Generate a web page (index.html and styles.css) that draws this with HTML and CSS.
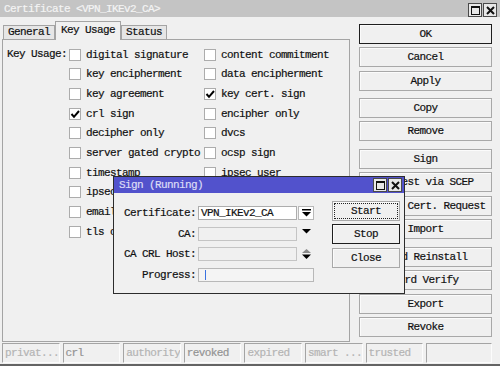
FILE: index.html
```html
<!DOCTYPE html>
<html>
<head>
<meta charset="utf-8">
<title>Certificate</title>
<link rel="stylesheet" href="styles.css">
</head>
<body>
<div class="window">
  <div class="titlebar">
    <span class="title">Certificate &lt;VPN_IKEv2_CA&gt;</span>
    <div class="tbtns">
      <span class="tbtn"><svg width="9" height="9" viewBox="0 0 9 9"><rect x="0.5" y="0.5" width="8" height="8" fill="none" stroke="#111" stroke-width="1"/><rect x="0.5" y="0.5" width="8" height="1.5" fill="#111"/></svg></span>
      <span class="tbtn"><svg width="9" height="9" viewBox="0 0 9 9"><path d="M1 1 L8 8 M8 1 L1 8" stroke="#111" stroke-width="2" fill="none"/></svg></span>
    </div>
  </div>
  <div class="main">
    <div class="left">
      <div class="tabs">
        <div class="tab t-gen">General</div>
        <div class="tab active t-ku">Key Usage</div>
        <div class="tab t-st">Status</div>
      </div>
      <div class="panel">
        <div class="grid">
          <div class="klabel">Key Usage:</div>
          <div class="cb"><span class="box"></span>digital signature</div>
          <div class="cb"><span class="box"></span>content commitment</div>
          <div class="cb"><span class="box"></span>key encipherment</div>
          <div class="cb"><span class="box"></span>data encipherment</div>
          <div class="cb"><span class="box"></span>key agreement</div>
          <div class="cb"><span class="box"><svg class="chk" width="10" height="10" viewBox="0 0 10 10"><path d="M1.5 5 L4 7.8 L9 2" stroke="#000" stroke-width="2" fill="none"/></svg></span>key cert. sign</div>
          <div class="cb"><span class="box"><svg class="chk" width="10" height="10" viewBox="0 0 10 10"><path d="M1.5 5 L4 7.8 L9 2" stroke="#000" stroke-width="2" fill="none"/></svg></span>crl sign</div>
          <div class="cb"><span class="box"></span>encipher only</div>
          <div class="cb"><span class="box"></span>decipher only</div>
          <div class="cb"><span class="box"></span>dvcs</div>
          <div class="cb"><span class="box"></span>server gated crypto</div>
          <div class="cb"><span class="box"></span>ocsp sign</div>
          <div class="cb"><span class="box"></span>timestamp</div>
          <div class="cb"><span class="box"></span>ipsec user</div>
          <div class="cb"><span class="box"></span>ipsec tunnel</div>
          <div class="cb"><span class="box"></span>ipsec end system</div>
          <div class="cb"><span class="box"></span>email protect</div>
          <div class="cb"><span class="box"></span>tls server</div>
          <div class="cb"><span class="box"></span>tls client</div>
          <div class="cb"><span class="box"></span>code sign</div>
        </div>
      </div>
    </div>
    <div class="side">
      <div class="btn def">OK</div>
      <div class="btn">Cancel</div>
      <div class="btn">Apply</div>
      <div class="btn gs">Copy</div>
      <div class="btn">Remove</div>
      <div class="btn gs">Sign</div>
      <div class="btn">Request via SCEP</div>
      <div class="btn">Create Cert. Request</div>
      <div class="btn">Import</div>
      <div class="btn gs">Card Reinstall</div>
      <div class="btn">Card Verify</div>
      <div class="btn">Export</div>
      <div class="btn">Revoke</div>
    </div>
  </div>
  <div class="status">
    <div class="sb">privat...</div>
    <div class="sb mid">crl</div>
    <div class="sb">authority</div>
    <div class="sb mid">revoked</div>
    <div class="sb">expired</div>
    <div class="sb">smart ...</div>
    <div class="sb">trusted</div>
    <div class="sb last"></div>
  </div>

  <div class="dialog">
    <div class="dtitle">
      <span class="title">Sign (Running)</span>
      <div class="tbtns">
        <span class="tbtn"><svg width="9" height="9" viewBox="0 0 9 9"><rect x="0.5" y="0.5" width="8" height="8" fill="none" stroke="#111" stroke-width="1"/><rect x="0.5" y="0.5" width="8" height="1.5" fill="#111"/></svg></span>
        <span class="tbtn"><svg width="9" height="9" viewBox="0 0 9 9"><path d="M1 1 L8 8 M8 1 L1 8" stroke="#111" stroke-width="2" fill="none"/></svg></span>
      </div>
    </div>
    <div class="dbody">
      <div class="form">
        <div class="lbl">Certificate:</div>
        <div class="inp">VPN_IKEv2_CA</div>
        <div class="dd boxed"><svg width="9" height="8" viewBox="0 0 9 8"><rect x="0" y="0" width="9" height="1.5" fill="#000"/><polygon points="0,3 9,3 4.5,7.5" fill="#000"/></svg></div>

        <div class="lbl">CA:</div>
        <div class="inp dis"></div>
        <div class="dd top"><svg width="9" height="5" viewBox="0 0 9 5"><polygon points="0,0 9,0 4.5,4.5" fill="#000"/></svg></div>

        <div class="lbl">CA CRL Host:</div>
        <div class="inp dis"></div>
        <div class="dd"><svg width="9" height="10" viewBox="0 0 9 10"><polygon points="0,4 9,4 4.5,0" fill="#8a8a8a"/><polygon points="0,5.5 9,5.5 4.5,10" fill="#000"/></svg></div>

        <div class="lbl">Progress:</div>
        <div class="inp prog"><span class="caret"></span></div>
      </div>
      <div class="dbtns">
        <div class="btn focus">Start</div>
        <div class="btn def">Stop</div>
        <div class="btn">Close</div>
      </div>
    </div>
  </div>
</div>
</body>
</html>
```

FILE: styles.css
```css
* { box-sizing: border-box; }
html, body { margin: 0; padding: 0; }
body {
  width: 500px;
  height: 366px;
  overflow: hidden;
  background: #f0f0f0;
  font-family: "Liberation Mono", "DejaVu Sans Mono", monospace;
  font-size: 11px;
  letter-spacing: -0.6px;
  color: #111;
  -webkit-text-stroke: 0.2px currentColor;
}
.window {
  position: relative;
  height: 366px;
  display: flex;
  flex-direction: column;
  border-bottom: 2px solid #646464;
}
.titlebar {
  height: 17px;
  flex: none;
  background: #c4c4c4;
  color: #f4f4f4;
  display: flex;
  align-items: center;
  padding-left: 4px;
}
.title { flex: 1; white-space: nowrap; }
.tbtns {
  display: flex;
  gap: 1px;
  margin-right: 3px;
  align-self: flex-end;
}
.tbtn {
  width: 14px;
  height: 14px;
  border: 1px solid #4a4a4a;
  background: #e8e8e8;
  display: flex;
  align-items: center;
  justify-content: center;
}
.main {
  flex: 1;
  display: flex;
  min-height: 0;
}
.left {
  width: 348px;
  margin-left: 2px;
  display: flex;
  flex-direction: column;
}
.tabs {
  height: 22px;
  flex: none;
  display: flex;
  align-items: flex-end;
  padding-left: 1px;
  position: relative;
  z-index: 1;
}
.tab {
  height: 14px;
  line-height: 13px;
  border: 1px solid #a4a4a4;
  border-bottom: none;
  background: #e6e6e6;
  text-align: center;
  white-space: nowrap;
}
.t-gen { width: 52px; }
.t-ku { width: 66px; }
.t-st { width: 46px; }
.tab.active {
  height: 19px;
  line-height: 16px;
  background: #f0f0f0;
  margin-bottom: -1px;
}
.panel {
  flex: 1;
  border: 1px solid #a4a4a4;
  background: #f0f0f0;
  padding: 5px 0 0 4px;
}
.grid {
  display: grid;
  grid-template-columns: 62px 135px 1fr;
  grid-auto-rows: 19.67px;
}
.klabel {
  grid-row: 1 / span 10;
  line-height: 19.67px;
  white-space: nowrap;
}
.cb {
  display: flex;
  align-items: center;
  gap: 5px;
  white-space: nowrap;
}
.box {
  width: 12px;
  height: 12px;
  flex: none;
  border: 1px solid #acacac;
  background: #fff;
  display: flex;
  align-items: center;
  justify-content: center;
}
.side {
  width: 133px;
  margin-left: 9px;
  padding-top: 6.5px;
  display: flex;
  flex-direction: column;
}
.btn {
  height: 20px;
  flex: none;
  border: 1px solid #a8a8a8;
  background: #f0f0f0;
  box-shadow: inset 1px 1px 0 #fbfbfb;
  display: flex;
  align-items: center;
  justify-content: center;
  white-space: nowrap;
  margin-top: 3.6px;
}
.side .btn:first-child { margin-top: 0; }
.side .btn.gs { margin-top: 7.2px; }
.btn.def { border-color: #1e1e1e; }
.btn.focus { outline: 1px dotted #222; outline-offset: -3px; }
.status {
  height: 22px;
  flex: none;
  display: flex;
  gap: 3px;
  padding: 1px 0 1px 2px;
}
.sb {
  width: 57.6px;
  height: 20px;
  flex: none;
  border: 1px solid;
  border-color: #a4a4a4 #fcfcfc #fcfcfc #a4a4a4;
  padding-left: 2px;
  line-height: 18px;
  color: #b4b4b4;
  white-space: nowrap;
  overflow: hidden;
}
.sb.mid { color: #939393; }
.sb.last { width: 66px; }

.dialog {
  position: absolute;
  left: 113px;
  top: 176px;
  width: 292px;
  height: 118px;
  border: 1px solid #2c2c2c;
  background: #f0f0f0;
  display: flex;
  flex-direction: column;
  z-index: 5;
}
.dtitle {
  height: 16px;
  flex: none;
  background: #5252cc;
  color: #dcdcf6;
  display: flex;
  align-items: center;
  padding-left: 5px;
}
.dtitle .tbtns { align-self: center; margin-right: 2px; }
.dbody {
  flex: 1;
  display: flex;
}
.form {
  display: grid;
  grid-template-columns: 74px 100px 16px;
  grid-auto-rows: 14px;
  row-gap: 6.7px;
  padding: 13px 0 0 10px;
  align-content: start;
}
.lbl {
  text-align: right;
  padding-right: 2px;
  line-height: 14px;
  white-space: nowrap;
}
.inp {
  width: 99px;
  height: 14px;
  border: 1px solid #adadad;
  background: #fff;
  padding-left: 2px;
  line-height: 12px;
  white-space: nowrap;
}
.inp.dis { background: #f0f0f0; border-color: #c4c4c4; }
.inp.prog {
  grid-column: 2 / span 2;
  width: 116px;
  background: #f4f4f4;
  border-color: #b8b8b8;
  display: flex;
  align-items: center;
}
.caret {
  width: 1px;
  height: 10px;
  margin-left: 4px;
  background: #3a72e0;
}
.dd {
  width: 16px;
  height: 14px;
  display: flex;
  align-items: center;
  justify-content: center;
}
.dd.boxed { border: 1px solid #b8b8b8; background: #fff; }
.dd.top { align-items: flex-start; padding-top: 2.5px; }
.dbtns {
  width: 68px;
  margin-left: auto;
  margin-right: 4px;
  padding-top: 7.7px;
  display: flex;
  flex-direction: column;
  gap: 3.5px;
}
.dbtns .btn { margin-top: 0; }
```
